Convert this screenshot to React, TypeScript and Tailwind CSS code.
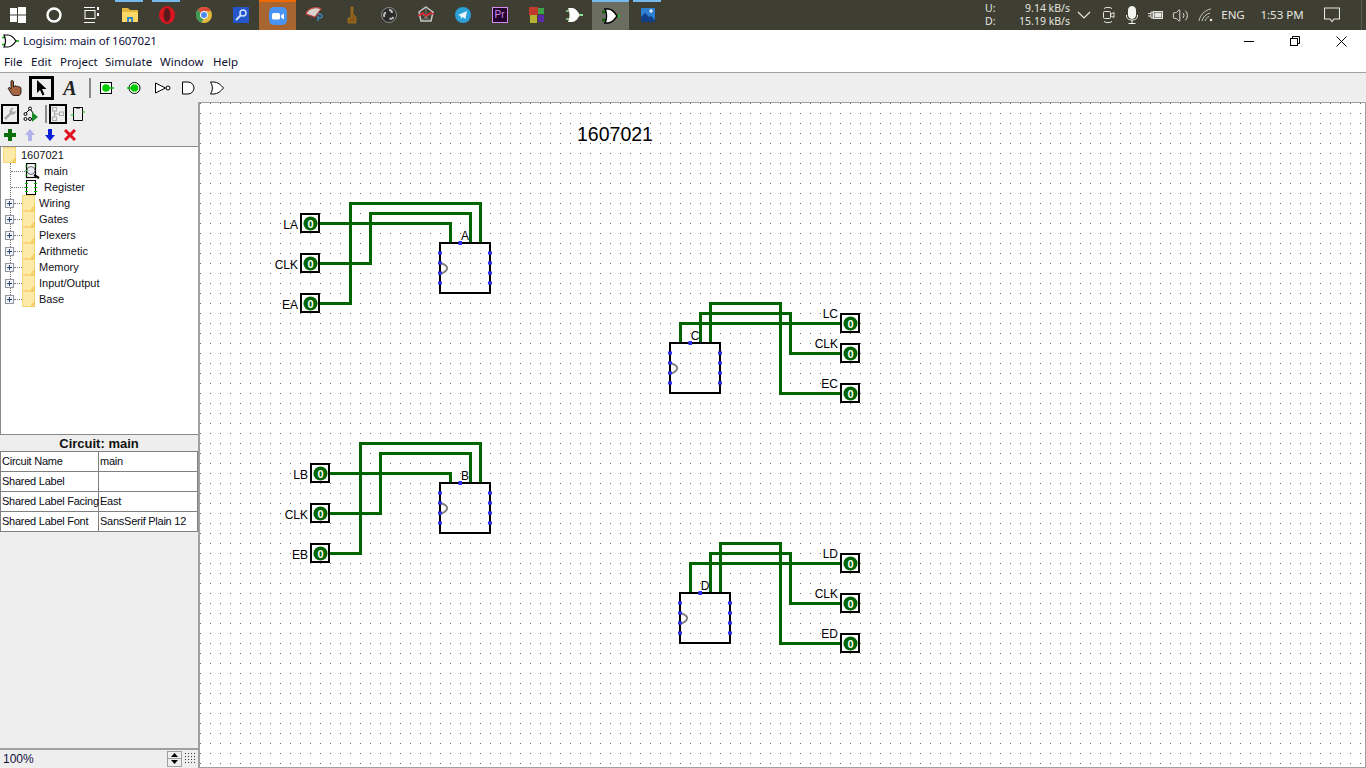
import React from 'react';
import { Volume2 } from 'lucide-react';

const uiFont = "font-['Noto_Sans',sans-serif]";
const swingFont = "font-['Liberation_Sans',sans-serif]";

// ---- taskbar icons ----
const WindowsIcon = () => (
  <svg width="18" height="18" viewBox="0 0 18 18" fill="#fff">
    <rect x="1" y="2" width="7" height="6.5" /><rect x="9" y="1" width="8" height="7.5" />
    <rect x="1" y="9.5" width="7" height="6.5" /><rect x="9" y="9.5" width="8" height="7.5" />
  </svg>
);
const CortanaIcon = () => (
  <svg width="18" height="18" viewBox="0 0 18 18"><circle cx="9" cy="9" r="6.5" fill="none" stroke="#fff" strokeWidth="2.4" /></svg>
);
const TaskViewIcon = () => (
  <svg width="18" height="18" viewBox="0 0 18 18" fill="none" stroke="#fff" strokeWidth="1">
    <path d="M1 1.500h11M1 16.500h11" /><rect x="2" y="4.500" width="10" height="8" /><path d="M15 1v3M15 7v3" strokeWidth="2" />
  </svg>
);
const ExplorerIcon = () => (
  <svg width="18" height="18" viewBox="0 0 18 18">
    <path d="M1 2h6l2 2h8v3H1z" fill="#e5b53c" /><rect x="1" y="6" width="16" height="10" fill="#fbd765" />
    <path d="M6 16v-5h6v5h-2v-3H8v3z" fill="#2f86c9" />
  </svg>
);
const OperaIcon = () => (
  <svg width="18" height="20" viewBox="0 0 18 20"><ellipse cx="9" cy="10" rx="8" ry="9" fill="#d8161f" /><ellipse cx="9" cy="10" rx="3.400" ry="7" fill="#5b1a1c" /></svg>
);
const ChromeIcon = () => (
  <svg width="18" height="18" viewBox="0 0 18 18">
    <circle cx="9" cy="9" r="8" fill="#e2b93a" /><path d="M9 1a8 8 0 0 1 7 4H9a4 4 0 0 0-3.500 2L3 3.500A8 8 0 0 1 9 1z" fill="#d94a3c" />
    <path d="M3 3.500 5.500 7a4 4 0 0 0 3 6L6.500 16.500A8 8 0 0 1 3 3.500z" fill="#3e9a55" /><circle cx="9" cy="9" r="3.600" fill="#4d8bee" stroke="#fff" strokeWidth="1" />
  </svg>
);
const SearchAppIcon = () => (
  <svg width="16" height="16" viewBox="0 0 16 16">
    <rect width="16" height="16" fill="#2456c9" /><circle cx="10" cy="6" r="3" fill="none" stroke="#cfe0ff" strokeWidth="1.500" />
    <path d="M8 8l-5 5" stroke="#cfe0ff" strokeWidth="2" />
  </svg>
);
const ZoomIcon = () => (
  <svg width="18" height="18" viewBox="0 0 18 18">
    <rect width="18" height="18" rx="5" fill="#4a94f1" /><rect x="3" y="6" width="8" height="6.500" rx="1.500" fill="#fff" /><path d="M12 8.500l3-2v6l-3-2z" fill="#fff" />
  </svg>
);
const SketchIcon = () => (
  <svg width="20" height="18" viewBox="0 0 20 18">
    <path d="M1 8c2-6 10-8 15-5l-6 8z" fill="#d9d4cf" stroke="#b5433e" strokeWidth="1.200" /><path d="M13 8c3 0 5 1 4 3-1 1-3 1-4 0v4" fill="none" stroke="#3b8cc4" strokeWidth="1.400" />
  </svg>
);
const WoodIcon = () => (
  <svg width="10" height="18" viewBox="0 0 10 18"><path d="M4 1h2v7l3 3v6H1v-5h3z" fill="#8a5a1c" stroke="#b8801f" strokeWidth=".6" /></svg>
);
const ObsIcon = () => (
  <svg width="18" height="18" viewBox="0 0 18 18">
    <circle cx="9" cy="9" r="7.500" fill="#2b2b2b" stroke="#8b8b8b" strokeWidth="1" />
    <path d="M9 4a3 3 0 0 1 3 3M13.500 11a3 3 0 0 1-4 1.500M4.500 11A3 3 0 0 1 6 6.500" fill="none" stroke="#bdbdbd" strokeWidth="2" />
  </svg>
);
const WebIcon = () => (
  <svg width="18" height="18" viewBox="0 0 18 18">
    <path d="M9 1l7 5-2 9H4L2 6z" fill="none" stroke="#c9c9c9" strokeWidth="1.500" /><path d="M9 1v15M2 6l12 9M16 6L4 15" stroke="#a5a5a5" strokeWidth=".6" />
    <path d="M1 10l5-3 3 3 4-3 4 1" fill="none" stroke="#e0262c" strokeWidth="1.600" />
  </svg>
);
const TelegramIcon = () => (
  <svg width="16" height="16" viewBox="0 0 16 16"><circle cx="8" cy="8" r="8" fill="#2a9fd8" /><path d="M3 8l9-4-1.500 8-3-2-1.500 2-.5-3z" fill="#e8f4fb" /></svg>
);
const PremiereIcon = () => (
  <div className={`flex h-4 w-4 items-center justify-center border border-[#d68cf0] bg-[#24052e] text-[10px] leading-none text-[#d68cf0] ${swingFont}`}>Pr</div>
);
const BlocksIcon = () => (
  <svg width="16" height="16" viewBox="0 0 16 16">
    <rect x="0" y="0" width="9" height="8" fill="#c0392b" /><rect x="9" y="1" width="6" height="6" fill="#3fa34d" />
    <rect x="1" y="8" width="7" height="8" fill="#b8b232" /><rect x="9" y="8" width="6" height="7" fill="#5b2aa8" />
  </svg>
);
const LogisimWhiteIcon = () => (
  <svg width="18" height="16" viewBox="0 0 18 16">
    <path d="M1 4h4M1 12h4" stroke="#8de08d" strokeWidth="1.500" /><path d="M15 8h3" stroke="#8de08d" strokeWidth="2" />
    <path d="M3 1h4c4 0 6 4 8 7-2 3-4 7-8 7H3c2-4 2-10 0-14z" fill="#fff" />
  </svg>
);
const LogisimActiveIcon = () => (
  <svg width="18" height="16" viewBox="0 0 18 16">
    <path d="M0 4h5M0 12h5" stroke="#0d640d" strokeWidth="2.500" /><path d="M15 8h3" stroke="#22c922" strokeWidth="2" />
    <path d="M3 1h3c5 0 7 4 9 7-2 3-4 7-9 7H3c2-4 2-10 0-14z" fill="#fff" stroke="#000" strokeWidth="1.500" />
  </svg>
);
const PhotosIcon = () => (
  <svg width="14" height="14" viewBox="0 0 14 14">
    <rect width="14" height="14" fill="#2f7fd0" /><path d="M0 14V9l4-4 4 4 2-1 4 4v2z" fill="#123f86" /><path d="M10 1v4M8 3h4" stroke="#fff" strokeWidth="1.200" />
  </svg>
);

const taskbarApps = [
  { id: 'explorer', icon: <ExplorerIcon />, running: true, cls: '' },
  { id: 'opera', icon: <OperaIcon />, running: true, cls: '' },
  { id: 'chrome', icon: <ChromeIcon />, running: false, cls: '' },
  { id: 'search', icon: <SearchAppIcon />, running: false, cls: '' },
  { id: 'zoom', icon: <ZoomIcon />, running: false, cls: 'bg-[#a8652f] border-t-[2px] border-[#f06a00]' },
  { id: 'sketch', icon: <SketchIcon />, running: false, cls: '' },
  { id: 'wood', icon: <WoodIcon />, running: false, cls: '' },
  { id: 'obs', icon: <ObsIcon />, running: false, cls: '' },
  { id: 'web', icon: <WebIcon />, running: false, cls: '' },
  { id: 'telegram', icon: <TelegramIcon />, running: false, cls: '' },
  { id: 'premiere', icon: <PremiereIcon />, running: false, cls: '' },
  { id: 'blocks', icon: <BlocksIcon />, running: false, cls: '' },
  { id: 'logisim-w', icon: <LogisimWhiteIcon />, running: false, cls: '' },
  { id: 'logisim', icon: <LogisimActiveIcon />, running: false, cls: 'bg-[#6b6d60] border-t-[2px] border-[#76b9ed]' },
  { id: 'photos', icon: <PhotosIcon />, running: true, cls: '' },
];

const Taskbar = () => (
  <div className={`flex h-[30px] shrink-0 items-stretch justify-between bg-[#3e3f32] text-[#e6e6e0] ${uiFont}`}>
    <div className="flex items-stretch">
      <div className="flex w-[36px] items-center justify-center"><WindowsIcon /></div>
      <div className="flex w-[36px] items-center justify-center"><CortanaIcon /></div>
      <div className="flex w-[39px] items-center justify-center"><TaskViewIcon /></div>
      {taskbarApps.map((a) => (
        <div key={a.id} className={`relative flex w-[37px] items-center justify-center ${a.cls}`}>
          {a.running && <span className="absolute left-[4px] right-[5px] top-0 h-[2px] bg-[#76b9ed]" />}
          {a.icon}
        </div>
      ))}
    </div>
    <div className="flex items-center text-[11.5px]">
      <div className="flex w-[30px] flex-col text-[10.5px] leading-[13px]"><span>U:</span><span>D:</span></div>
      <div className="flex w-[55px] flex-col items-end text-[10.5px] leading-[13px]"><span>9.14 kB/s</span><span>15.19 kB/s</span></div>
      <div className="flex w-[28px] justify-center">
        <svg width="14" height="8" viewBox="0 0 14 8" fill="none" stroke="#e6e6e0" strokeWidth="1.200"><path d="M1 1l6 6 6-6" /></svg>
      </div>
      <div className="flex w-[22px] justify-center">
        <svg width="14" height="18" viewBox="0 0 14 18" fill="none" stroke="#e6e6e0">
          <rect x="1.500" y="5.500" width="7" height="7" rx="1" /><path d="M9 8l3-1.500v5L9 10M2 2.500c2-1.500 6-1.500 8 0M2 15.500c2 1.500 6 1.500 8 0" />
        </svg>
      </div>
      <div className="flex w-[23px] justify-center">
        <svg width="12" height="18" viewBox="0 0 12 18" fill="none" stroke="#f4f4f0">
          <rect x="2.500" y=".5" width="7" height="12" rx="3.500" fill="#f4f4f0" /><path d="M.5 9c0 4 2 5 5.500 5s5.500-1 5.500-5M6 14v3M2.500 17.500h7" />
        </svg>
      </div>
      <div className="flex w-[26px] justify-center">
        <svg width="16" height="10" viewBox="0 0 16 10" fill="none" stroke="#e6e6e0">
          <path d="M0 3.500h3M0 6h3M3 2h2v6H3z" /><rect x="5.500" y="1.500" width="9" height="7" /><rect x="6.500" y="2.500" width="7" height="5" fill="#e6e6e0" stroke="none" />
        </svg>
      </div>
      <div className="flex w-[22px] justify-center"><Volume2 size={17} strokeWidth={1.300} /></div>
      <div className="ml-[4px] flex w-[22px] justify-center">
        <svg width="16" height="14" viewBox="0 0 16 14" fill="none" stroke="#c9c9c2">
          <path d="M1 13C2 7 7 2 13 1M4 13c1-4 4-7 8-8M7 13c.5-2 2-4 4-4.500" /><circle cx="13" cy="12" r="1.300" fill="#e6e6e0" stroke="none" />
        </svg>
      </div>
      <span className="w-[32px] text-center">ENG</span>
      <span className="w-[66px] text-center">1:53 PM</span>
      <div className="flex w-[34px] justify-center">
        <svg width="16" height="16" viewBox="0 0 16 16" fill="none" stroke="#e6e6e0" strokeWidth="1.100">
          <path d="M.5 1h15v11h-5.500l-2 2.500L6 12H.5z" />
        </svg>
      </div>
      <div className="ml-[12px] h-full w-[5px] border-l border-[#5a5b4e]" />
    </div>
  </div>
);

const TitleBar = () => (
  <div className={`flex h-[22px] shrink-0 items-center justify-between bg-white ${uiFont}`}>
    <div className="flex items-center">
      <div className="ml-[2px] w-[21px]">
        <svg width="17" height="14" viewBox="0 0 17 14" fill="none">
          <path d="M0 3.500h4M0 10.500h4" stroke="#0a0" strokeWidth="1.500" /><path d="M14 7h3" stroke="#0a0" strokeWidth="1.500" />
          <path d="M2 1h4c4 0 6 3 8 6-2 3-4 6-8 6H2c2-4 2-8 0-12z" fill="#fff" stroke="#000" strokeWidth="1.200" />
        </svg>
      </div>
      <span className="text-[11.5px] tracking-[-0.2px] text-[#101040]">Logisim: main of 1607021</span>
    </div>
    <div className="flex items-center">
      <div className="flex w-[46px] justify-center"><svg width="10" height="10" viewBox="0 0 10 10"><path d="M0 5.500h10" stroke="#000" /></svg></div>
      <div className="flex w-[46px] justify-center">
        <svg width="10" height="10" viewBox="0 0 10 10" fill="none" stroke="#000"><rect x=".5" y="2.500" width="7" height="7" /><path d="M2.500 2.500v-2h7v7h-2" /></svg>
      </div>
      <div className="flex w-[46px] justify-center">
        <svg width="11" height="11" viewBox="0 0 11 11" stroke="#000"><path d="M.5.500l10 10M10.500.500l-10 10" /></svg>
      </div>
      <div className="w-[2px]" />
    </div>
  </div>
);

const menuItems = [
  { label: 'File', w: 'w-[27px]' }, { label: 'Edit', w: 'w-[29px]' }, { label: 'Project', w: 'w-[45px]' },
  { label: 'Simulate', w: 'w-[55px]' }, { label: 'Window', w: 'w-[53px]' }, { label: 'Help', w: 'w-[30px]' },
];

const MenuBar = () => (
  <div className={`flex h-[21px] shrink-0 items-center border-b border-[#a0a0a0] bg-white pl-[4px] text-[11.5px] text-[#101030] ${uiFont}`}>
    {menuItems.map((m) => <span key={m.label} className={m.w}>{m.label}</span>)}
  </div>
);

// ---- main toolbar ----
const Toolbar = () => (
  <div className="flex h-[29px] shrink-0 items-center bg-[#eeeeee]">
    <div className="ml-[6px] flex w-[18px] justify-center">
      <svg width="16" height="18" viewBox="0 0 16 18">
        <path d="M5 1.500c1 0 1.500.7 1.500 1.500v5l1-.5V7c1-.5 1.500 0 2 .3 1-.3 1.500 0 2 .5 1.500-.2 2.500.5 2.500 2v3.200c0 2-1 3.500-3 3.500H7c-1.500 0-2-1-3-2.500L1.500 10c-.7-1 .6-2 1.500-1.200l1 1V3c0-1 .3-1.500 1-1.500z" fill="#a5643f" stroke="#000" strokeWidth=".8" />
      </svg>
    </div>
    <div className="ml-[5px] flex h-[24px] w-[25px] items-center justify-center border-[3px] border-black">
      <svg width="11" height="16" viewBox="0 0 11 16"><path d="M1 0v13l3-3 2.500 5.500 2-1L6 9h4.500z" fill="#000" /></svg>
    </div>
    <span className="ml-[7px] w-[18px] text-center font-['Liberation_Serif',serif] text-[20px] font-bold italic leading-none text-[#222]">A</span>
    <div className="ml-[10px] h-[20px] w-[2px] bg-[#8a8a8a]" />
    <div className="ml-[9px] w-[14px]">
      <svg width="14" height="14" viewBox="0 0 14 14">
        <rect x=".5" y="1.500" width="11" height="11" fill="#fff" stroke="#000" /><circle cx="6" cy="7" r="3.800" fill="#0c0" /><path d="M9 7h5" stroke="#0c0" strokeWidth="1.500" />
      </svg>
    </div>
    <div className="ml-[13px] w-[14px]">
      <svg width="14" height="14" viewBox="0 0 14 14">
        <circle cx="7.500" cy="7" r="5.500" fill="#fff" stroke="#000" /><circle cx="7.500" cy="7" r="3.800" fill="#0c0" /><path d="M0 7h4" stroke="#0c0" strokeWidth="1.500" />
      </svg>
    </div>
    <div className="ml-[14px] w-[16px]">
      <svg width="16" height="12" viewBox="0 0 16 12" fill="#fff" stroke="#000"><path d="M.5 1l10 5-10 5z" /><circle cx="13" cy="6" r="2" /></svg>
    </div>
    <div className="ml-[11px] w-[14px]">
      <svg width="14" height="14" viewBox="0 0 14 14" fill="#fff" stroke="#000"><path d="M.5 1H6a6 6 0 0 1 0 12H.5z" /></svg>
    </div>
    <div className="ml-[14px] w-[14px]">
      <svg width="14" height="14" viewBox="0 0 14 14" fill="#fff" stroke="#000"><path d="M.5 1H3c5 0 8 3 10.500 6C11 10 8 13 3 13H.5c2.500-4 2.500-8 0-12z" /></svg>
    </div>
  </div>
);

// ---- explorer pane ----
const Folder = () => (
  <svg width="13" height="16" viewBox="0 0 13 16" className="shrink-0">
    <rect x=".5" y=".5" width="12" height="15" fill="#fdeaa8" stroke="#f6d67a" /><path d="M12.500 11v4.500H9M11 11.500v2.500H9" fill="none" stroke="#f2c24a" />
  </svg>
);

const PlusBox = () => (
  <div className="flex h-[9px] w-[9px] items-center justify-center border border-[#8f97a5] bg-[#f1f1f1]">
    <svg width="7" height="7" viewBox="0 0 7 7"><path d="M1 3.500h5M3.500 1v5" stroke="#2a3f7f" /></svg>
  </div>
);

const libraries = ['Wiring', 'Gates', 'Plexers', 'Arithmetic', 'Memory', 'Input/Output', 'Base'];

const ProjectTree = () => (
  <div className={`relative h-[289px] shrink-0 border border-r-0 border-[#8a8a8a] bg-white text-[11px] text-[#111118] ${swingFont}`}>
    <div className="absolute left-[9px] top-[16px] h-[136px] border-l border-dotted border-[#777]" />
    <div className="flex h-[16px] items-center pl-[2px]">
      <Folder /><span className="ml-[5px]">1607021</span>
    </div>
    <div className="flex h-[16px] items-center pl-[10px]">
      <span className="w-[14px] border-t border-dotted border-[#777]" />
      <svg width="15" height="16" viewBox="0 0 15 16" fill="none">
        <rect x="1.500" y=".5" width="9" height="14" stroke="#000" strokeWidth="1.200" /><circle cx="6" cy="7.500" r="4" fill="#e8ecf8" stroke="#666" /><path d="M9 12l5 3" stroke="#000" strokeWidth="2.200" />
        <path d="M.5 3h2M9.500 3h2M.5 7.500h2M.5 12h2" stroke="#0b0" />
      </svg>
      <span className="ml-[4px]">main</span>
    </div>
    <div className="flex h-[16px] items-center pl-[10px]">
      <span className="w-[14px] border-t border-dotted border-[#777]" />
      <svg width="15" height="16" viewBox="0 0 15 16" fill="none">
        <rect x="1.500" y="1.500" width="9" height="14" stroke="#000" />
        <path d="M0 4.500h3M9 4.500h3M0 8.500h3M9 8.500h3M0 12.500h3M9 12.500h3" stroke="#0b0" />
      </svg>
      <span className="ml-[4px]">Register</span>
    </div>
    {libraries.map((l) => (
      <div key={l} className="flex h-[16px] items-center pl-[4px]">
        <div className="relative z-10"><PlusBox /></div>
        <span className="w-[8px] border-t border-dotted border-[#777]" />
        <Folder />
        <span className="ml-[4px]">{l}</span>
      </div>
    ))}
  </div>
);

const attrs = [
  { k: 'Circuit Name', v: 'main' },
  { k: 'Shared Label', v: '' },
  { k: 'Shared Label Facing', v: 'East' },
  { k: 'Shared Label Font', v: 'SansSerif Plain 12' },
];

const AttrTable = () => (
  <div className={`flex flex-1 flex-col ${swingFont}`}>
    <div className="flex h-[16px] items-center justify-center pt-[2px] text-[13px] font-bold text-[#111]">Circuit: main</div>
    <div className="w-[198px] border-t border-[#808080] text-[11px] tracking-[-0.25px] text-[#0a0a14]">
      {attrs.map((a) => (
        <div key={a.k} className="grid h-[20px] grid-cols-[99px_1fr] border-b border-[#808080] bg-white">
          <div className="flex items-center whitespace-nowrap border-x border-[#808080] pl-[1px]">{a.k}</div>
          <div className="flex items-center border-r border-[#808080] pl-[1px]">{a.v}</div>
        </div>
      ))}
    </div>
  </div>
);

const ZoomControl = () => (
  <div className={`flex h-[20px] shrink-0 items-center border-t-2 border-[#a0a0a0] pb-[1px] ${swingFont}`}>
    <div className="ml-[1px] flex h-[16px] w-[166px] items-center bg-[#eeeeee] pl-[2px] text-[12px] text-[#101040]">100%</div>
    <div className="flex h-[16px] w-[15px] flex-col border border-[#a0a0a0]">
      <div className="flex flex-1 items-center justify-center border-b border-[#a0a0a0]"><svg width="7" height="4" viewBox="0 0 7 4"><path d="M3.500 0L7 4H0z" /></svg></div>
      <div className="flex flex-1 items-center justify-center"><svg width="7" height="4" viewBox="0 0 7 4"><path d="M0 0h7L3.500 4z" /></svg></div>
    </div>
    <div className="ml-[3px]">
      <svg width="12" height="12" viewBox="0 0 12 12" fill="#333">
        {[0, 3, 6, 9].flatMap((x) => [0, 3, 6, 9].map((y) => <rect key={`${x}-${y}`} x={x} y={y} width="1" height="1" />))}
      </svg>
    </div>
  </div>
);

const SidePanel = () => (
  <div className="flex w-[200px] shrink-0 flex-col border-r-2 border-[#a0a0a0] bg-[#eeeeee]">
    <div className="flex h-[23px] shrink-0 items-center">
      <div className="ml-[1px] flex h-[20px] w-[18px] items-center justify-center border-[2px] border-black">
        <svg width="14" height="14" viewBox="0 0 14 14"><path d="M13 4a3.800 3.800 0 0 1-5 3.500L3 13l-2-2 5.500-5A3.800 3.800 0 0 1 11 1L8.500 3.200 10.500 5z" fill="#a9a9a9" /></svg>
      </div>
      <div className="ml-[4px] w-[16px]">
        <svg width="16" height="16" viewBox="0 0 16 16" fill="none" stroke="#000">
          <circle cx="7" cy="2.500" r="1.500" /><circle cx="2.500" cy="8" r="1.500" /><circle cx="2.500" cy="13" r="1.500" /><circle cx="7" cy="13" r="1.500" /><path d="M6 4L3 7M8 4l2 3" />
          <path d="M9 6l6 5-6 5z" fill="#1a8a2a" stroke="none" />
        </svg>
      </div>
      <div className="ml-[6px] h-[18px] w-[2px] bg-[#8a8a8a]" />
      <div className="ml-[2px] flex h-[20px] w-[18px] items-center justify-center border-[2px] border-black">
        <svg width="14" height="14" viewBox="0 0 14 14" fill="none" stroke="#a9a9a9"><rect x="1.500" y=".5" width="4" height="3.500" /><rect x="1.500" y="10" width="4" height="3.500" /><rect x="8.500" y="5" width="4" height="3.500" /><path d="M3.500 4v6M3.500 7h5" /></svg>
      </div>
      <div className="ml-[4px] w-[14px]">
        <svg width="14" height="16" viewBox="0 0 14 16" fill="none">
          <path d="M2.500 1.500h9v13h-9z" stroke="#000" /><path d="M0 9h3M11 6h3" stroke="#0b0" /><path d="M6 1v2M8 1v2" stroke="#000" />
        </svg>
      </div>
    </div>
    <div className="flex h-[21px] shrink-0 items-center pb-[2px]">
      <div className="ml-[4px] w-[20px]"><svg width="12" height="12" viewBox="0 0 12 12"><path d="M4 0h4v4h4v4H8v4H4V8H0V4h4z" fill="#0a6e0a" /></svg></div>
      <div className="w-[20px]"><svg width="12" height="12" viewBox="0 0 12 12"><path d="M6 0l5 6H8v6H4V6H1z" fill="#b3b3ec" /></svg></div>
      <div className="w-[20px]"><svg width="12" height="12" viewBox="0 0 12 12"><path d="M6 12L1 6h3V0h4v6h3z" fill="#0a1fd8" /></svg></div>
      <div className="w-[20px]"><svg width="12" height="12" viewBox="0 0 12 12"><path d="M1 1l10 10M11 1L1 11" stroke="#e01020" strokeWidth="3" /></svg></div>
    </div>
    <ProjectTree />
    <AttrTable />
    <ZoomControl />
  </div>
);

// ---- circuit canvas ----
type Side = 'left' | 'right';
const wires: string[] = [
  '320,223.5 450.5,223.5 450.5,243', '320,263.5 370.5,263.5 370.5,213.5 470.5,213.5 470.5,243', '320,303.5 350.5,303.5 350.5,203.5 480.5,203.5 480.5,243',
  '330,473.5 450.5,473.5 450.5,483', '330,513.5 380.5,513.5 380.5,453.5 470.5,453.5 470.5,483', '330,553.5 360.5,553.5 360.5,443.5 480.5,443.5 480.5,483',
  '840,323.5 680.5,323.5 680.5,343', '840,353.5 790.5,353.5 790.5,313.5 700.5,313.5 700.5,343', '840,393.5 780.5,393.5 780.5,303.5 710.5,303.5 710.5,343',
  '840,563.5 690.5,563.5 690.5,593', '840,603.5 790.5,603.5 790.5,553.5 710.5,553.5 710.5,593', '840,643.5 780.5,643.5 780.5,543.5 720.5,543.5 720.5,593',
];

const pins: { x: number; y: number; label: string; side: Side }[] = [
  { x: 310, y: 223, label: 'LA', side: 'left' }, { x: 310, y: 263, label: 'CLK', side: 'left' }, { x: 310, y: 303, label: 'EA', side: 'left' },
  { x: 320, y: 473, label: 'LB', side: 'left' }, { x: 320, y: 513, label: 'CLK', side: 'left' }, { x: 320, y: 553, label: 'EB', side: 'left' },
  { x: 850, y: 323, label: 'LC', side: 'right' }, { x: 850, y: 353, label: 'CLK', side: 'right' }, { x: 850, y: 393, label: 'EC', side: 'right' },
  { x: 850, y: 563, label: 'LD', side: 'right' }, { x: 850, y: 603, label: 'CLK', side: 'right' }, { x: 850, y: 643, label: 'ED', side: 'right' },
];

const registers = [
  { x: 440, y: 243, label: 'A' }, { x: 440, y: 483, label: 'B' },
  { x: 670, y: 343, label: 'C' }, { x: 680, y: 593, label: 'D' },
];

const Pin = ({ x, y, label, side }: { x: number; y: number; label: string; side: Side }) => (
  <g>
    <rect x={x - 9} y={y - 9} width="18" height="18" fill="#fff" stroke="#000" strokeWidth="2" />
    <circle cx={x + 0.5} cy={y + 0.5} r="7" fill="#006400" />
    <text x={x + 0.5} y={y + 4.5} fontSize="11" textAnchor="middle" fill="#fff" fontFamily="Liberation Sans, sans-serif" fontWeight="bold">0</text>
    <text x={x - 12} y={side === 'left' ? y + 5.5 : y - 5} fontSize="12" textAnchor="end" fill="#000" fontFamily="Liberation Sans, sans-serif">{label}</text>
  </g>
);

const Register = ({ x, y, label }: { x: number; y: number; label: string }) => (
  <g>
    <rect x={x} y={y} width="50" height="50" fill="none" stroke="#000" strokeWidth="2" />
    <path d={`M${x},${y + 20} q8,2 7,6 q-1,3 -7,5`} fill="none" stroke="#808080" strokeWidth="2" />
    <text x={x + 25} y={y - 3} fontSize="12" textAnchor="middle" fill="#000" fontFamily="Liberation Sans, sans-serif">{label}</text>
    {[10, 20, 30, 40].flatMap((d) => [
      <rect key={`l${d}`} x={x - 2} y={y + d - 1.5} width="4" height="3" fill="#3030ff" />,
      <rect key={`r${d}`} x={x + 48} y={y + d - 1.5} width="4" height="3" fill="#3030ff" />,
    ])}
    <rect x={x + 18.5} y={y - 2} width="3.500" height="4" fill="#3030ff" />
  </g>
);

const CircuitCanvas = () => (
  <div className="flex-1 overflow-hidden border-y border-r border-[#a0a0a0] bg-white">
    <svg width="1166" height="665" viewBox="200 103 1166 665" className="block">
      <defs>
        <pattern id="grid" x="200" y="103" width="10" height="10" patternUnits="userSpaceOnUse">
          <rect width="1" height="1" fill="#666" />
        </pattern>
      </defs>
      <rect x="200" y="103" width="1166" height="665" fill="url(#grid)" />
      <text x="577" y="141" fontSize="19.5" fill="#000" fontFamily="Liberation Sans, sans-serif">1607021</text>
      {wires.map((p) => <polyline key={p} points={p} fill="none" stroke="#006400" strokeWidth="3" />)}
      {registers.map((r) => <Register key={r.label} {...r} />)}
      {pins.map((p) => <Pin key={`${p.label}-${p.y}`} {...p} />)}
    </svg>
  </div>
);

export default function App() {
  return (
    <div className="flex h-[768px] w-[1366px] flex-col overflow-hidden bg-white">
      <Taskbar />
      <TitleBar />
      <MenuBar />
      <Toolbar />
      <div className="flex min-h-0 flex-1">
        <SidePanel />
        <CircuitCanvas />
      </div>
    </div>
  );
}
